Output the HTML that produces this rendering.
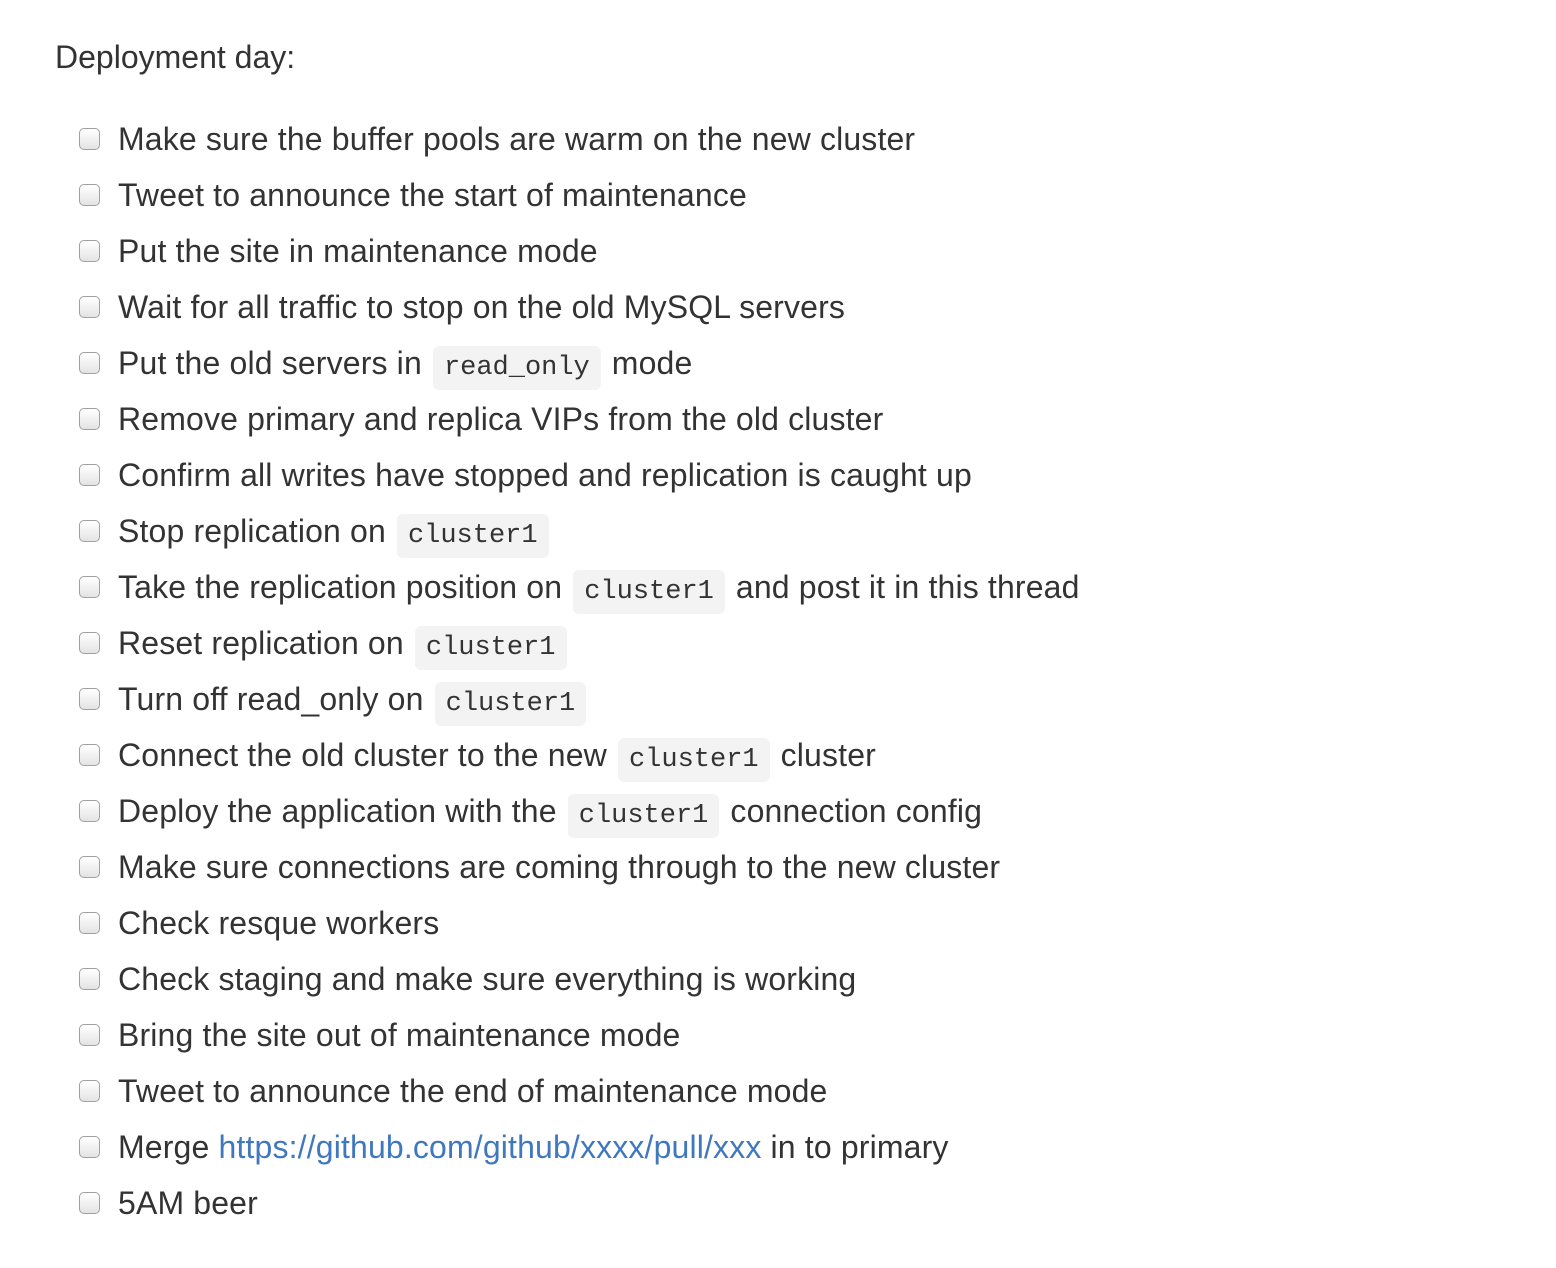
<!DOCTYPE html>
<html><head><meta charset="utf-8"><style>
body{margin:0;background:#fff;color:#333;font-family:"Liberation Sans",Arial,sans-serif;font-size:32px;width:1556px;height:1268px;overflow:hidden}
h{position:absolute;left:55px;top:38px;line-height:38px;font-size:32px}
ul{position:absolute;left:0;top:111px;margin:0;padding:0;list-style:none}
li{position:relative;height:56px;line-height:56px;padding-left:118px;white-space:nowrap;letter-spacing:0.15px}
li:before{content:"";position:absolute;left:79px;top:17px;width:21px;height:22px;border:1px solid #a0a0a0;border-radius:5px;background:linear-gradient(#fff,#e4e4e4);box-sizing:border-box}
code{font-family:"Liberation Mono","DejaVu Sans Mono",monospace;font-size:27px;letter-spacing:0;background:#f3f3f3;border-radius:6px;padding:7px 11px;margin:0 2px}
a{color:#4078c0;text-decoration:none}
</style></head><body>
<h>Deployment day:</h>
<ul>
<li>Make sure the buffer pools are warm on the new cluster</li>
<li>Tweet to announce the start of maintenance</li>
<li>Put the site in maintenance mode</li>
<li>Wait for all traffic to stop on the old MySQL servers</li>
<li>Put the old servers in <code>read_only</code> mode</li>
<li>Remove primary and replica VIPs from the old cluster</li>
<li>Confirm all writes have stopped and replication is caught up</li>
<li>Stop replication on <code>cluster1</code></li>
<li>Take the replication position on <code>cluster1</code> and post it in this thread</li>
<li>Reset replication on <code>cluster1</code></li>
<li>Turn off read_only on <code>cluster1</code></li>
<li>Connect the old cluster to the new <code>cluster1</code> cluster</li>
<li>Deploy the application with the <code>cluster1</code> connection config</li>
<li>Make sure connections are coming through to the new cluster</li>
<li>Check resque workers</li>
<li>Check staging and make sure everything is working</li>
<li>Bring the site out of maintenance mode</li>
<li>Tweet to announce the end of maintenance mode</li>
<li>Merge <a>https://github.com/github/xxxx/pull/xxx</a> in to primary</li>
<li>5AM beer</li>
</ul>
</body></html>
